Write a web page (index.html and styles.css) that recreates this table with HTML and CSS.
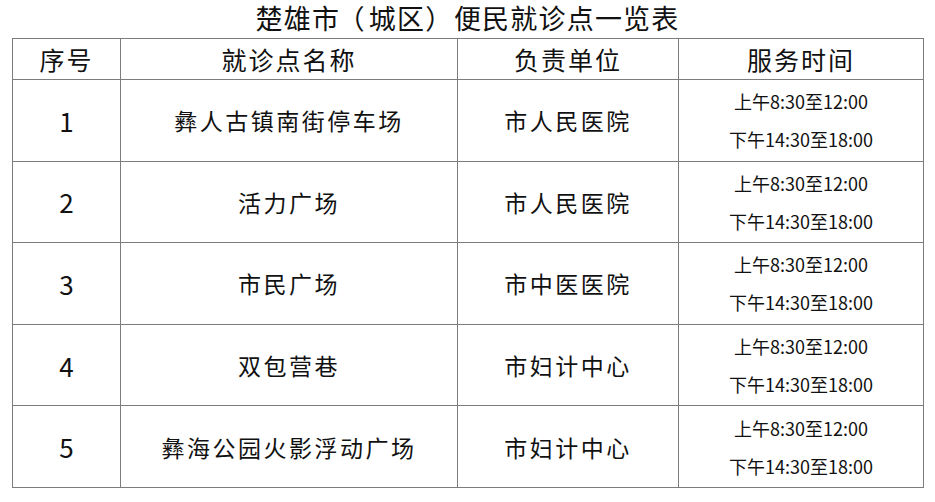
FILE: index.html
```html
<!DOCTYPE html>
<html lang="zh-CN">
<head>
<meta charset="utf-8">
<title>楚雄市（城区）便民就诊点一览表</title>
<link rel="stylesheet" href="styles.css">
</head>
<body>
<div class="page">
  <h1 class="title">楚雄市<span class="paren open">（</span>城区<span class="paren close">）</span>便民就诊点一览表</h1>
  <table class="grid">
    <colgroup>
      <col class="c-no">
      <col class="c-name">
      <col class="c-unit">
      <col class="c-time">
    </colgroup>
    <thead>
      <tr class="head">
        <th>序号</th>
        <th>就诊点名称</th>
        <th>负责单位</th>
        <th>服务时间</th>
      </tr>
    </thead>
    <tbody>
      <tr>
        <td class="no">1</td>
        <td class="txt">彝人古镇南街停车场</td>
        <td class="txt">市人民医院</td>
        <td class="time"><div>上午8:30至12:00</div><div>下午14:30至18:00</div></td>
      </tr>
      <tr>
        <td class="no">2</td>
        <td class="txt">活力广场</td>
        <td class="txt">市人民医院</td>
        <td class="time"><div>上午8:30至12:00</div><div>下午14:30至18:00</div></td>
      </tr>
      <tr>
        <td class="no">3</td>
        <td class="txt">市民广场</td>
        <td class="txt">市中医医院</td>
        <td class="time"><div>上午8:30至12:00</div><div>下午14:30至18:00</div></td>
      </tr>
      <tr>
        <td class="no">4</td>
        <td class="txt">双包营巷</td>
        <td class="txt">市妇计中心</td>
        <td class="time"><div>上午8:30至12:00</div><div>下午14:30至18:00</div></td>
      </tr>
      <tr>
        <td class="no">5</td>
        <td class="txt">彝海公园火影浮动广场</td>
        <td class="txt">市妇计中心</td>
        <td class="time"><div>上午8:30至12:00</div><div>下午14:30至18:00</div></td>
      </tr>
    </tbody>
  </table>
</div>
</body>
</html>
```

FILE: styles.css
```css
html, body {
  margin: 0;
  padding: 0;
  background: #ffffff;
}
body {
  font-family: "Noto Sans CJK SC", "Noto Sans", sans-serif;
  color: #111111;
}
.page {
  width: 935px;
  height: 502px;
  padding: 0 12px;
  box-sizing: border-box;
}
.title {
  margin: 0;
  height: 38px;
  line-height: 36px;
  font-size: 27px;
  font-weight: 400;
  letter-spacing: 1.2px;
  text-align: center;
  color: #111111;
}
.paren {
  font-feature-settings: "halt" 1;
}
.paren.open {
  margin-left: 11px;
  margin-right: 3px;
}
.paren.close {
  margin-right: 14px;
}
.grid {
  border-collapse: collapse;
  table-layout: fixed;
  width: 911px;
}
.c-no { width: 108px; }
.c-name { width: 337px; }
.c-unit { width: 221px; }
.c-time { width: 245px; }
.grid th,
.grid td {
  border: 1px solid #7c7c7c;
  padding: 0;
  text-align: center;
  vertical-align: middle;
}
.head th {
  height: 40px;
  font-size: 25px;
  font-weight: 400;
  letter-spacing: 2px;
  line-height: 40px;
}
.grid tbody td {
  height: 80.6px;
}
.txt {
  font-size: 23px;
  letter-spacing: 2.5px;
}
.no {
  font-size: 26px;
}
.time {
  font-size: 18px;
  line-height: 38px;
}
```
